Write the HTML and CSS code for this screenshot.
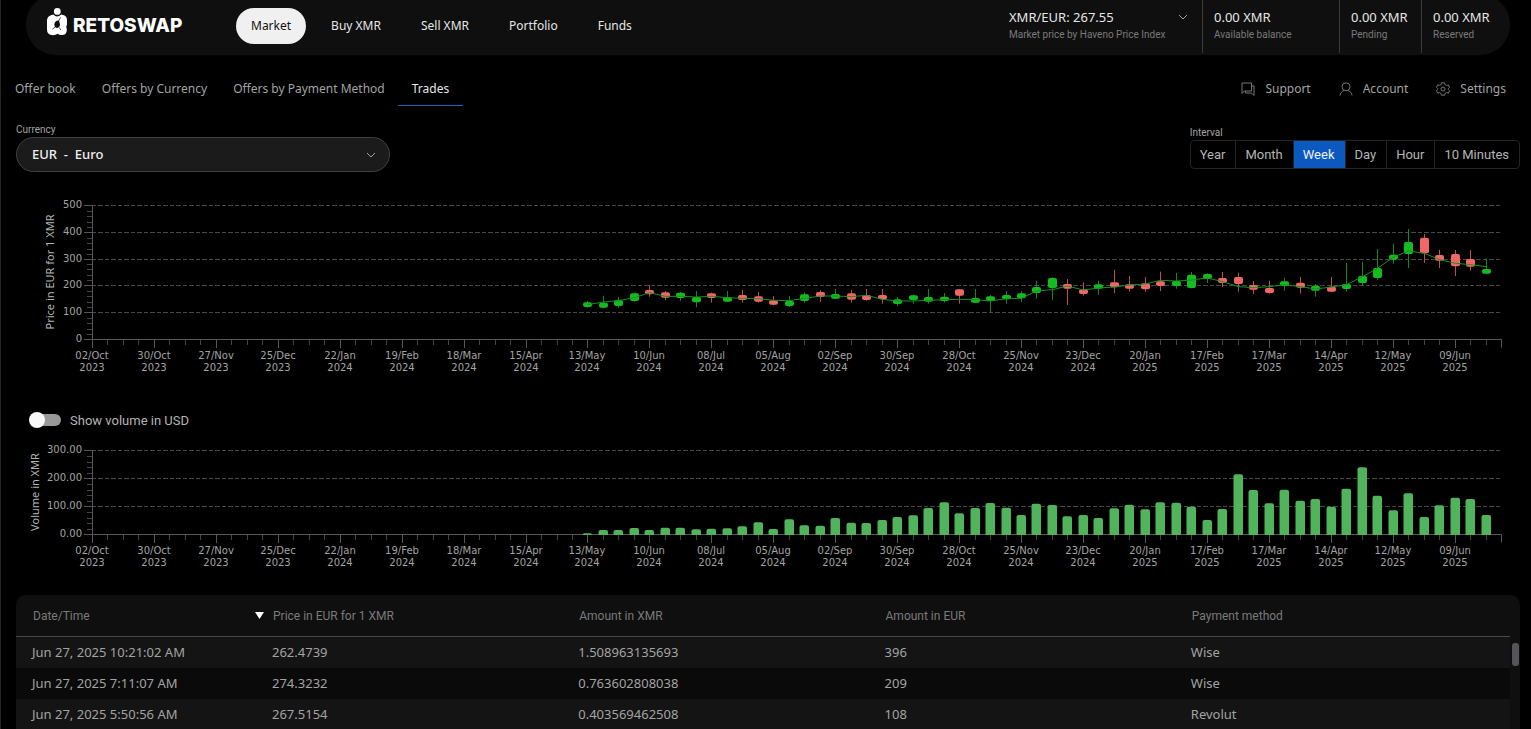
FILE: index.html
```html
<!DOCTYPE html>
<html lang="en">
<head>
<meta charset="utf-8">
<title>RetoSwap – Market trades</title>
<link rel="stylesheet" href="styles.css">
</head>
<body>
<div class="app">
  <header class="topbar">
    <a class="brand" href="#">
      <svg class="brand-mark" viewBox="0 0 21 28" aria-hidden="true">
        <path d="M4 7.200 L6.400 6.600 Q10 10.600 14.200 6.600 L17 7.200 Q20 8.600 20 12 L20 16.500 Q18.600 19 19.800 21 Q20.400 26.600 15.400 27 Q12.400 27.400 10.600 25.800 Q8 27.600 4.600 27 Q0 26.400 0 21.500 L0 12 Q.4 8.400 4 7.200Z" fill="#fff"/>
        <path d="M12 12.600 Q8.200 12.400 7.400 16 Q7 19.400 10 20 Q13 19.600 13 16.600Z" fill="#0f0f0f"/>
        <path d="M13.600 9.400 L11.600 13 M5.400 21.200 L8.400 18.800 M12.200 19.400 L13.800 22" stroke="#0f0f0f" stroke-width=".7" fill="none"/>
        <circle cx="10.300" cy="3.400" r="3.400" fill="#fff"/>
      </svg>
      <span class="brand-name">RETOSWAP</span>
    </a>
    <nav class="main-nav">
      <button class="nav-item active">Market</button>
      <button class="nav-item">Buy XMR</button>
      <button class="nav-item">Sell XMR</button>
      <button class="nav-item">Portfolio</button>
      <button class="nav-item">Funds</button>
    </nav>
    <div class="stats">
      <div class="stat stat-price">
        <div class="select-wrap">
          <select class="price-select" id="price"><option>XMR/EUR: 267.55</option></select>
          <svg class="chevron" viewBox="0 0 10 6" aria-hidden="true"><path d="M1 1l4 4 4-4"/></svg>
        </div>
        <label class="caption" for="price">Market price by Haveno Price Index</label>
      </div>
      <div class="stat stat-available"><span class="amount">0.00 XMR</span><span class="caption">Available balance</span></div>
      <div class="stat"><span class="amount">0.00 XMR</span><span class="caption">Pending</span></div>
      <div class="stat stat-last"><span class="amount">0.00 XMR</span><span class="caption">Reserved</span></div>
    </div>
  </header>

  <div class="subbar">
    <nav class="tabs">
      <button class="tab">Offer book</button>
      <button class="tab">Offers by Currency</button>
      <button class="tab">Offers by Payment Method</button>
      <button class="tab active">Trades</button>
    </nav>
    <nav class="tools">
      <button class="tool">
        <svg viewBox="0 0 14 14" aria-hidden="true"><path d="M1 1h9.500v8H3.500L1 11.500zM10.500 4H13v9.500L10.500 11H4.500V9"/></svg>Support</button>
      <button class="tool">
        <svg viewBox="0 0 14 14" aria-hidden="true"><circle cx="7" cy="4.800" r="4"/><path d="M1 13.500c0-2.500 2-4.200 4-5M13 13.500c0-2.500-2-4.200-4-5"/></svg>Account</button>
      <button class="tool">
        <svg viewBox="0 0 14 14" aria-hidden="true"><circle cx="7" cy="7" r="2"/><path d="M5.400 .8h3.200l.5 1.900 1.300.7 1.900-.5 1.200 2.500-1.200 1.100v1l1.200 1.200-1.200 2.400-1.900-.5-1.300.8-.5 1.800H5.400l-.5-1.800-1.300-.8-1.900.5L.5 8.700l1.200-1.200v-1L.5 5.400l1.200-2.500 1.900.5 1.300-.7z"/></svg>Settings</button>
    </nav>
  </div>

  <main class="content">
    <section class="filters">
      <div class="field">
        <label class="field-label" for="currency">Currency</label>
        <div class="select-wrap">
          <select class="currency-select" id="currency"><option>EUR &nbsp;-&nbsp; Euro</option></select>
          <svg class="chevron" viewBox="0 0 10 6" aria-hidden="true"><path d="M1 1l4 4 4-4"/></svg>
        </div>
      </div>
      <div class="interval">
        <span class="field-label" id="interval-label">Interval</span>
        <div class="segments" role="group" aria-labelledby="interval-label">
          <button class="segment">Year</button>
          <button class="segment">Month</button>
          <button class="segment active">Week</button>
          <button class="segment">Day</button>
          <button class="segment">Hour</button>
          <button class="segment">10 Minutes</button>
        </div>
      </div>
    </section>

    <svg class="chart price-chart" id="price-chart"></svg>

    <label class="toggle"><input class="switch" type="checkbox">Show volume in USD</label>

    <svg class="chart volume-chart" id="volume-chart"></svg>

    <section class="trades">
      <table class="trades-table">
        <colgroup><col class="col-date"><col class="col-data"><col class="col-data"><col class="col-data"><col></colgroup>
        <thead>
          <tr>
            <th><div class="sorted">Date/Time<svg class="sort-arrow" viewBox="0 0 9 7" aria-hidden="true"><path d="M0 0h9L4.500 7z"/></svg></div></th>
            <th>Price in EUR for 1 XMR</th><th>Amount in XMR</th><th>Amount in EUR</th><th>Payment method</th>
          </tr>
        </thead>
        <tbody>
          <tr><td>Jun 27, 2025 10:21:02 AM</td><td>262.4739</td><td>1.508963135693</td><td>396</td><td>Wise</td></tr>
          <tr><td>Jun 27, 2025 7:11:07 AM</td><td>274.3232</td><td>0.763602808038</td><td>209</td><td>Wise</td></tr>
          <tr><td>Jun 27, 2025 5:50:56 AM</td><td>267.5154</td><td>0.403569462508</td><td>108</td><td>Revolut</td></tr>
        </tbody>
      </table>
      <div class="scroll-track"><div class="scroll-thumb"></div></div>
    </section>
  </main>
</div>
<script src="charts.js"></script>
</body>
</html>
```
FILE: styles.css
```css
* { box-sizing: border-box; }
body {
  margin: 0;
  background: #000;
  color: #b4b4b4;
  font-family: "Noto Sans", sans-serif;
  font-size: 12px;
}
button, select { font: inherit; color: inherit; background: none; border: 0; padding: 0; margin: 0; }
select { appearance: none; outline: none; }
.app {
  height: 100vh;
  overflow: hidden;
  display: flex;
  flex-direction: column;
  border-left: 1px solid #262626;
}

/* top bar */
.topbar {
  flex: none;
  display: flex;
  align-items: center;
  height: 61px;
  margin: -6px 21px 0 25px;
  padding: 3px 0 0 21px;
  background: #0f0f0f;
  border-radius: 30px;
}
.brand { display: flex; align-items: center; gap: 5px; width: 189px; margin-bottom: 8px; color: #fff; text-decoration: none; }
.brand-mark { flex: none; width: 21px; height: 28px; }
.brand-name { font-family: Inter, sans-serif; font-weight: 800; font-size: 19px; line-height: 22px; padding-top: 8px; }
.main-nav { display: flex; gap: 10px; }
.nav-item { height: 36px; padding: 0 15px 2px; border-radius: 18px; color: #e6e6e6; }
.nav-item.active { background: #f0f0f0; color: #111; }
.stats { margin-left: auto; display: flex; align-self: stretch; margin-top: -3px; margin-bottom: 2px; }
.stat {
  display: flex;
  flex-direction: column;
  width: 82px;
  padding: 14px 0 0 11px;
  border-left: 1px solid #3a3a3a;
  white-space: nowrap;
}
.stat-price { width: 193px; padding-left: 0; border-left: 0; }
.stat-available { width: 137px; }
.stat-last { width: 89px; }
.amount, .price-select { color: #e6e6e6; font-size: 13px; line-height: 18px; }
.price-select { width: 180px; height: 18px; }
.caption { color: #7a7a7a; font-family: Roboto, sans-serif; font-size: 10px; line-height: 18px; }
.select-wrap { position: relative; display: flex; }
.chevron { width: 10px; height: 6px; fill: none; stroke: #a0a0a0; position: absolute; right: 14px; top: 6px; }

/* secondary navigation */
.subbar { flex: none; display: flex; justify-content: space-between; height: 34px; margin-top: 17px; padding: 0 11px 0 1px; }
.tabs, .tools { display: flex; }
.tab { padding: 0 13px; border-bottom: 1px solid transparent; color: #a3a3a3; }
.tab.active { padding: 0 14px; color: #e6e6e6; border-bottom-color: #1464c0; }
.tool { display: flex; align-items: center; gap: 10px; padding: 0 14px 1px; color: #a3a3a3; }
.tool svg { width: 14px; height: 14px; fill: none; stroke: #777; }

/* filters */
.content { flex: 1; min-height: 0; display: flex; flex-direction: column; padding: 16px 11px 0 15px; }
.filters { flex: none; display: flex; justify-content: space-between; align-items: center; }
.field { width: 374px; }
.field-label { display: block; color: #a3a3a3; font-family: Roboto, sans-serif; font-size: 10px; line-height: 15px; }
.currency-select {
  width: 100%;
  height: 35px;
  padding: 0 0 2px 15px;
  border: 1px solid #404040;
  border-radius: 18px;
  background: #1b1b1b;
  color: #f0f0f0;
  font-size: 13px;
  font-weight: 500;
}
.currency-select + .chevron { top: 15px; }
.segments { display: flex; height: 29px; border: 1px solid #242424; border-radius: 4px; overflow: hidden; }
.segment { padding: 0 10px 0 9px; border-right: 1px solid #242424; color: #b4b4b4; font-family: Roboto, sans-serif; font-size: 13px; }
.segment:last-child { border-right: 0; }
.segment.active { background: #0b59bf; color: #f0f0f0; }

/* charts */
.chart { flex: none; display: block; margin-left: -16px; font-family: "DejaVu Sans", sans-serif; font-size: 10px; fill: #a3a3a3; }
.price-chart { height: 190px; margin-top: 23px; }
.volume-chart { height: 132px; margin-top: 10px; }
.axis { stroke: #585858; fill: none; }
.minor { stroke: #444; fill: none; }
.gridline { stroke: #484848; stroke-dasharray: 4 2 5 2; fill: none; }
.axis-title { font-family: "Noto Sans", sans-serif; font-size: 11px; fill: #b4b4b4; }
.up { fill: #14bb21; }
.down { fill: #f06767; }
.wick-up { stroke: #128a1b; }
.wick-down { stroke: #b85050; }
.average { stroke: #169120; fill: none; }
.volume { fill: #51b35c; }

/* volume switch */
.toggle { flex: none; display: flex; align-items: center; gap: 9px; height: 20px; margin: 25px 0 0 19px; font-family: Roboto, sans-serif; font-size: 13px; }
.switch { appearance: none; position: relative; width: 26px; height: 12px; margin: 0; border-radius: 6px; background: #999; }
.switch::before { content: ""; position: absolute; left: -6px; top: -2px; width: 16px; height: 16px; border-radius: 50%; background: #fafafa; }

/* trades */
.trades { flex: 1; min-height: 0; display: flex; overflow: hidden; margin-top: 23px; background: #0f0f0f; border-radius: 10px 10px 0 0; }
.trades-table { flex: 1; align-self: flex-start; table-layout: fixed; border-collapse: separate; border-spacing: 0; }
.col-date { width: 240px; }
.col-data { width: 20.5%; }
th { height: 42px; padding: 0 0 0 17px; border-bottom: 1px solid #484848; color: #7a7a7a; font-family: Roboto, sans-serif; font-size: 12px; font-weight: 400; text-align: left; }
td { height: 31px; padding: 0 0 2px 16px; color: #a3a3a3; font-size: 13px; }
tbody tr:nth-child(odd) { background: #141414; }
tbody tr:nth-child(even) { background: #0a0a0a; }
.sorted { display: flex; align-items: center; justify-content: space-between; }
.sort-arrow { width: 9px; height: 7px; margin-right: -8px; fill: #fff; }
.scroll-track { flex: none; width: 10px; padding: 48px 1px 0 2px; }
.scroll-thumb { height: 23px; border-radius: 3px; background: #555558; }
```
FILE: charts.js
```js
const NS = 'http://www.w3.org/2000/svg';
const WEEKS = 91;          // number of weekly steps on the time axis
const FIRST = 32;          // first week that has trades
const LEFT = 92;           // room for the vertical axis
const RIGHT = 19;

const dates = ['02/Oct 2023', '30/Oct 2023', '27/Nov 2023', '25/Dec 2023', '22/Jan 2024', '19/Feb 2024',
  '18/Mar 2024', '15/Apr 2024', '13/May 2024', '10/Jun 2024', '08/Jul 2024', '05/Aug 2024', '02/Sep 2024',
  '30/Sep 2024', '28/Oct 2024', '25/Nov 2024', '23/Dec 2024', '20/Jan 2025', '17/Feb 2025', '17/Mar 2025',
  '14/Apr 2025', '12/May 2025', '09/Jun 2025'];

// direction, high, body top, body bottom, low, average; in thirds of a unit, growing downwards
const candles = `g,243,247,261,263,254 g,227,248,263,265,246 g,231,240,258,263,242 g,218,220,243,245,233
r,195,210,223,230,218 r,213,217,233,240,229 g,216,218,234,242,229 g,213,231,247,262,231
r,218,220,234,248,229 g,213,231,245,246,233 r,210,225,240,248,235 r,216,229,245,248,236
r,228,241,254,256,241 g,228,243,258,261,242 g,217,223,243,248,235 r,210,216,231,246,228
g,207,222,236,238,228 r,210,220,239,248,230 r,207,225,240,242,226 r,207,225,238,251,238
g,231,238,252,258,243 g,224,226,240,251,243 g,207,231,245,251,241 g,219,230,243,248,239
r,207,208,227,251,238 g,207,234,248,249,239 g,225,229,243,278,243 g,213,225,238,251,236
g,213,220,235,246,235 g,182,201,219,236,213 g,172,174,204,240,209 r,177,192,206,255,198
r,187,208,222,227,210 g,182,193,206,224,204 r,150,187,202,219,201 r,168,193,206,215,195
r,171,190,208,215,192 r,155,184,198,213,181 g,159,183,198,206,183 g,156,164,204,205,180
g,160,162,177,189,174 r,156,174,189,201,185 r,158,171,192,215,200 r,183,195,209,222,203
r,182,204,219,221,200 g,173,184,198,212,194 r,171,188,203,221,200 g,192,197,212,230,207
r,171,200,215,216,201 g,129,192,207,215,194 g,125,168,189,197,170 g,87,144,174,180,145
g,71,104,119,131,111 g,27,66,102,144,93 r,42,53,100,128,100 r,89,105,122,144,119
r,90,102,139,168,130 r,90,117,140,152,134 g,115,147,161,161,140`.split(/\s+/).map(r => r.split(','));

const volumes = [280, 270, 270, 264, 270, 263, 263, 268, 266, 265, 259, 247, 267, 238, 256, 257, 234, 248, 249, 240,
  231, 226, 204, 187, 220, 204, 189, 203, 225, 191, 195, 229, 225, 234, 205, 194, 208, 187, 188, 200, 240, 207,
  103, 150, 190, 149, 182, 177, 200, 146, 82, 167, 211, 160, 231, 196, 173, 177, 225];

function add(svg, name, attrs, text) {
  const el = document.createElementNS(NS, name);
  for (const key in attrs) el.setAttribute(key, attrs[key]);
  if (text) el.textContent = text;
  svg.appendChild(el);
}

function drawAxes(svg, o) {
  const width = svg.parentNode.clientWidth - 10;
  svg.setAttribute('width', width);
  const right = width - RIGHT;
  const x = i => Math.round(LEFT + i * (right - LEFT) / WEEKS) + 0.5;
  const height = o.bottom - o.top;
  o.labels.forEach((label, i) => {
    const y = Math.round(o.bottom - height * i / (o.labels.length - 1)) + 0.5;
    if (i) add(svg, 'path', { class: 'gridline', d: `M${LEFT} ${y}H${right + 1}` });
    add(svg, 'path', { class: 'axis', d: `M${LEFT - 8} ${y}h8` });
    add(svg, 'text', { x: LEFT - 10, y: y + 2.5, 'text-anchor': 'end' }, label);
    if (i < o.labels.length - 1) {
      const step = height / (o.labels.length - 1) / 5;
      for (let k = 1; k < 5; k++) add(svg, 'path', { class: 'minor', d: `M${LEFT - 5} ${Math.round(y - k * step) + 0.5}h5` });
    }
  });
  add(svg, 'path', { class: 'axis', d: `M${LEFT + 0.5} ${o.top}V${o.bottom + 8}M${LEFT} ${o.bottom + 0.5}H${right + 0.5}v8` });
  for (let i = 0; i < WEEKS; i++) {
    const major = i % 4 === 0 && i / 4 < dates.length;
    add(svg, 'path', { class: major ? 'axis' : 'minor', d: `M${x(i)} ${o.bottom + 1}v${major ? 8 : 5}` });
    if (major) {
      const parts = dates[i / 4].split(' ');
      add(svg, 'text', { x: x(i) - 0.5, y: o.bottom + 20, 'text-anchor': 'middle' }, parts[0]);
      add(svg, 'text', { x: x(i) - 0.5, y: o.bottom + 32, 'text-anchor': 'middle' }, parts[1]);
    }
  }
  const middle = (o.top + o.bottom) / 2;
  add(svg, 'text', { class: 'axis-title', 'text-anchor': 'middle', transform: `translate(${o.titleX} ${middle}) rotate(-90)` }, o.title);
  return x;
}

function draw() {
  const price = document.getElementById('price-chart');
  price.replaceChildren();
  let x = drawAxes(price, { top: 10, bottom: 144, labels: ['0', '100', '200', '300', '400', '500'], title: 'Price in EUR for 1 XMR', titleX: 54 });
  const y = c => 25 + c / 3;
  candles.forEach((c, i) => {
    const kind = c[0] === 'g' ? 'up' : 'down', cx = x(FIRST + i);
    add(price, 'path', { class: 'wick-' + kind, d: `M${cx} ${y(c[1])}V${y(c[4])}` });
    add(price, 'rect', { class: kind, x: cx - 4.5, y: y(c[2]), width: 9, height: y(c[3]) - y(c[2]), rx: 2 });
  });
  add(price, 'polyline', { class: 'average', points: candles.map((c, i) => `${x(FIRST + i)},${y(c[5])}`).join(' ') });

  const volume = document.getElementById('volume-chart');
  volume.replaceChildren();
  x = drawAxes(volume, { top: 10, bottom: 94, labels: ['0.00', '100.00', '200.00', '300.00'], title: 'Volume in XMR', titleX: 39 });
  volumes.forEach((v, i) => {
    const h = (285 - v) / 3, l = x(FIRST + i) - 5, r = Math.min(2, h);
    add(volume, 'path', { class: 'volume', d: `M${l} 95v${r - h}q0 -${r} ${r} -${r}h${9.5 - 2 * r}q${r} 0 ${r} ${r}V95z` });
  });
}

draw();
window.addEventListener('resize', draw);
```
